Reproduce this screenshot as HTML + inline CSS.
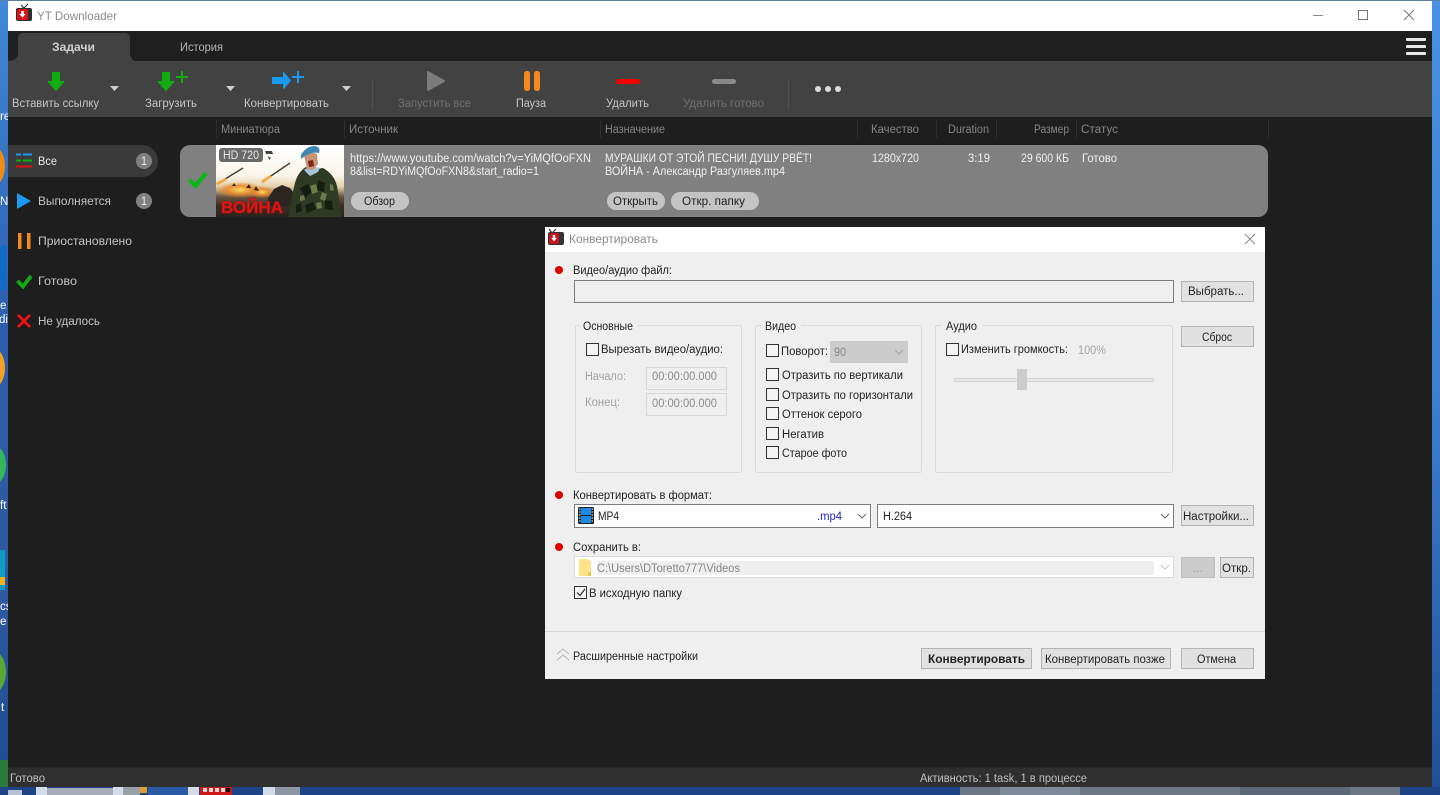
<!DOCTYPE html>
<html lang="ru"><head><meta charset="utf-8"><title>YT Downloader</title>
<style>
html,body{margin:0;padding:0;width:1440px;height:795px;overflow:hidden;background:#1e1e1e}
svg{display:block}
text{font-family:"Liberation Sans","DejaVu Sans",sans-serif;font-size:11.5px;white-space:pre}
.tb{fill:#c6c6c6}.dis{fill:#6f6f6f}.hd{fill:#858585}.sb{fill:#c4c4c4}.rw{fill:#efefef}
.pl{fill:#222}.dl{fill:#222}.gy{fill:#a2a2a2}
.btn{fill:#e1e1e1;stroke:#b4b4b4}.cb{fill:#f4f4f4;stroke:#333}
.grp{fill:none;stroke:#dadada}
</style></head><body>
<svg width="1440" height="795" viewBox="0 0 1440 795" xmlns="http://www.w3.org/2000/svg">
<defs>
<linearGradient id="dl" x1="0" y1="0" x2="0" y2="1"><stop offset="0" stop-color="#4189d8"/><stop offset=".4" stop-color="#2d5fae"/><stop offset=".75" stop-color="#30599f"/><stop offset="1" stop-color="#1d4a8e"/></linearGradient>
<linearGradient id="dr" x1="0" y1="0" x2="0" y2="1"><stop offset="0" stop-color="#4a90e2"/><stop offset=".5" stop-color="#3c7fd0"/><stop offset="1" stop-color="#1f4f96"/></linearGradient>
<linearGradient id="sky" x1="0" y1="0" x2="0" y2="1"><stop offset="0" stop-color="#fff"/><stop offset=".42" stop-color="#faf6ec"/><stop offset=".58" stop-color="#e4cfa8"/><stop offset=".72" stop-color="#6a5240"/><stop offset=".85" stop-color="#3a2c24"/><stop offset="1" stop-color="#2a221c"/></linearGradient>
<radialGradient id="ex"><stop offset="0" stop-color="#ffdc62"/><stop offset=".55" stop-color="#e8892a" stop-opacity=".85"/><stop offset="1" stop-color="#e8892a" stop-opacity="0"/></radialGradient>
</defs>

<!-- desktop -->
<rect width="1440" height="795" fill="#1e4488"/>
<rect width="8" height="795" fill="url(#dl)"/>
<rect x="1432" width="8" height="795" fill="url(#dr)"/>
<rect width="1440" height="1" fill="#5d7f9f"/>
<ellipse cx="-7" cy="166" rx="12" ry="20" fill="#f08a10"/>
<rect x="0" y="245" width="7" height="46" rx="3" fill="#1468c8"/>
<ellipse cx="-7" cy="368" rx="12" ry="20" fill="#f4a020"/>
<ellipse cx="-7" cy="465" rx="13" ry="20" fill="#35b85a"/>
<rect x="0" y="550" width="5" height="40" fill="#109cc0"/><rect x="0" y="577" width="5" height="8" fill="#f2b21c"/>
<ellipse cx="-7" cy="672" rx="13" ry="21" fill="#5aa83a"/>
<rect x="0" y="760" width="8" height="27" fill="#2a7a3a"/>
<text x="0" y="205" style="fill:#fff">N</text><text x="0" y="120" style="fill:#fff">re</text><text x="0" y="309" style="fill:#fff">e</text><text x="-1" y="323" style="fill:#fff">di</text>
<text x="0" y="509" style="fill:#fff">ft</text><text x="0" y="610" style="fill:#fff">cs</text><text x="0" y="625" style="fill:#fff">e</text><text x="1" y="711" style="fill:#fff">t</text>
<!-- bottom strip -->
<rect x="0" y="787" width="1440" height="8" fill="#1e4488"/>
<rect x="8" y="790" width="14" height="5" fill="#b9c2d2"/>
<rect x="36" y="787" width="11" height="8" fill="#d4dcea"/>
<rect x="47" y="788" width="66" height="7" fill="#a6adb8"/>
<rect x="113" y="787" width="10" height="8" fill="#d4dcea"/>
<rect x="123" y="787" width="17" height="8" fill="#9aa0a8"/>
<rect x="140" y="787" width="7" height="6" fill="#e0a030"/>
<rect x="148" y="787" width="40" height="8" fill="#2a5aa5"/>
<rect x="188" y="787" width="11" height="8" fill="#d4dcea"/>
<rect x="200" y="787" width="32" height="8" fill="#d01818"/>
<path d="M203 788h4v4h-4zM209 788h4v4h-4zM215 788h4v4h-4zM221 788h4v4h-4z" fill="#f6d8d8"/>
<rect x="226" y="788" width="4" height="4" fill="#111"/>
<rect x="263" y="787" width="12" height="8" fill="#d4dcea"/>
<rect x="275" y="787" width="25" height="8" fill="#8c96a4"/>
<rect x="960" y="787" width="440" height="8" fill="#6c7684"/>
<rect x="1000" y="787" width="80" height="8" fill="#7c8a9a"/>
<rect x="1240" y="787" width="110" height="8" fill="#5a6878"/>

<!-- main window -->
<rect x="8" y="1" width="1424" height="30" fill="#fff"/>
<rect x="8" y="31" width="1424" height="30" fill="#1f1f1f"/>
<rect x="8" y="61" width="1424" height="56" fill="#424242"/>
<rect x="8" y="117" width="1424" height="650" fill="#1e1e1e"/>
<rect x="8" y="767" width="1424" height="20" fill="#2f2f2f"/>

<!-- title bar -->
<path d="M20 9 L24 8 L28 4" stroke="#333" stroke-width="1.200" fill="none"/><path d="M21 5 L24 8" stroke="#333" stroke-width="1.200"/>
<rect x="16" y="8" width="16" height="13" rx="2" fill="#2f2f2f"/>
<rect x="17" y="9" width="11" height="11" rx="2" fill="#d8131c"/>
<path d="M21.200 11 h2.600 v3 h1.800 l-3.100 3.600 l-3.100 -3.600 h1.800z" fill="#fff"/>
<text x="37" y="20" textLength="80" lengthAdjust="spacingAndGlyphs" style="fill:#8a8a8a;font-size:12px">YT Downloader</text>
<path d="M1313 15.500h10" stroke="#8a8a8a"/>
<rect x="1358.500" y="10.500" width="9" height="9" fill="none" stroke="#777"/>
<path d="M1404 10l10 10M1414 10l-10 10" stroke="#777" fill="none"/>

<!-- tabs -->
<path d="M18 61 V38 a5 5 0 0 1 5-5 H125 a5 5 0 0 1 5 5 V61z" fill="#424242"/>
<path d="M8 61 Q16 61 18 55 V61z M130 55 Q132 61 136 61 H130z" fill="#424242"/>
<text x="52" y="51" textLength="43" lengthAdjust="spacingAndGlyphs" style="fill:#cfcfcf;font-weight:bold">Задачи</text>
<text x="180" y="51" textLength="43" lengthAdjust="spacingAndGlyphs" style="fill:#b4b4b4">История</text>
<rect x="1406" y="38" width="20" height="3" rx="1" fill="#e8e8e8"/><rect x="1406" y="45" width="20" height="3" rx="1" fill="#e8e8e8"/><rect x="1406" y="52" width="20" height="3" rx="1" fill="#e8e8e8"/>

<!-- toolbar icons -->
<path d="M52.500 72.500h7v9h4.500L56 90.500 48 81.500h4.500z" fill="#10ac10" stroke="#10ac10" stroke-linejoin="round"/>
<path d="M162.500 72.500h7v9h4.500L166 90.500 158 81.500h4.500z" fill="#10ac10" stroke="#10ac10" stroke-linejoin="round"/>
<path d="M176 77h12M182 71v12" stroke="#10ac10" stroke-width="2"/>
<path d="M272.500 77.500h11V72.500l7 8-7 8v-5h-11z" fill="#1a9af0" stroke="#1a9af0" stroke-linejoin="round"/>
<path d="M292 77h12M298 71v12" stroke="#1a9af0" stroke-width="2"/>
<path d="M110 86h9l-4.500 5z M226 86h9l-4.500 5z M342 86h9l-4.500 5z" fill="#cfcfcf"/>
<path d="M372.500 80v30M788.500 80v30" stroke="#505050"/>
<path d="M428 72l16 9-16 9z" fill="#7c7c7c" stroke="#7c7c7c" stroke-width="2" stroke-linejoin="round"/>
<rect x="524" y="71" width="6" height="20" rx="2.500" fill="#f5871f"/><rect x="534" y="71" width="6" height="20" rx="2.500" fill="#f5871f"/>
<rect x="616" y="79" width="24" height="5" rx="2.500" fill="#f00000"/>
<rect x="712" y="79" width="24" height="5" rx="2.500" fill="#888"/>
<circle cx="818" cy="89" r="3" fill="#ddd"/><circle cx="828" cy="89" r="3" fill="#ddd"/><circle cx="838" cy="89" r="3" fill="#ddd"/>
<text class="tb" x="12" y="107" textLength="87" lengthAdjust="spacingAndGlyphs">Вставить ссылку</text>
<text class="tb" x="145" y="107" textLength="52" lengthAdjust="spacingAndGlyphs">Загрузить</text>
<text class="tb" x="244" y="107" textLength="85" lengthAdjust="spacingAndGlyphs">Конвертировать</text>
<text class="dis" x="398" y="107" textLength="73" lengthAdjust="spacingAndGlyphs">Запустить все</text>
<text class="tb" x="516" y="107" textLength="30" lengthAdjust="spacingAndGlyphs">Пауза</text>
<text class="tb" x="606" y="107" textLength="43" lengthAdjust="spacingAndGlyphs">Удалить</text>
<text class="dis" x="683" y="107" textLength="81" lengthAdjust="spacingAndGlyphs">Удалить готово</text>

<!-- column header -->
<path d="M216.500 120v18M344.500 120v18M600.500 120v18M857.500 120v18M936.500 120v18M996.500 120v18M1076.500 120v18M1268.500 120v18" stroke="#2e2e2e"/>
<text class="hd" x="221" y="133" textLength="59" lengthAdjust="spacingAndGlyphs">Миниатюра</text>
<text class="hd" x="349" y="133" textLength="49" lengthAdjust="spacingAndGlyphs">Источник</text>
<text class="hd" x="605" y="133" textLength="60" lengthAdjust="spacingAndGlyphs">Назначение</text>
<text class="hd" x="871" y="133" textLength="48" lengthAdjust="spacingAndGlyphs">Качество</text>
<text class="hd" x="948" y="133" textLength="41" lengthAdjust="spacingAndGlyphs">Duration</text>
<text class="hd" x="1034" y="133" textLength="35" lengthAdjust="spacingAndGlyphs">Размер</text>
<text class="hd" x="1081" y="133" textLength="37" lengthAdjust="spacingAndGlyphs">Статус</text>

<!-- sidebar -->
<path d="M8 145H142a16 16 0 0 1 0 32H8z" fill="#3a3a3a"/>
<path d="M16 154.500h5M23 154.500h9" stroke="#1a9af0" stroke-width="2"/>
<path d="M16 160.500h5M23 160.500h9" stroke="#10ac10" stroke-width="2"/>
<path d="M16 166.500h16" stroke="#e01010" stroke-width="2"/>
<circle cx="144" cy="161" r="8" fill="#808080"/><circle cx="144" cy="201" r="8" fill="#808080"/>
<text x="141" y="165" textLength="6" lengthAdjust="spacingAndGlyphs" style="fill:#eee">1</text>
<text x="141" y="205" textLength="6" lengthAdjust="spacingAndGlyphs" style="fill:#eee">1</text>
<path d="M17 193l14 8-14 8z" fill="#1a9af0"/>
<rect x="18" y="233" width="3.500" height="16" fill="#f5871f"/><rect x="27" y="233" width="3.500" height="16" fill="#f5871f"/>
<path d="M17.500 281l5.500 5.500 8-10.500" stroke="#10ac10" stroke-width="3.800" fill="none"/>
<path d="M18 315l12 12M30 315l-12 12" stroke="#ee1111" stroke-width="2.800" fill="none"/>
<text x="38" y="165" textLength="19" lengthAdjust="spacingAndGlyphs" style="fill:#eaeaea">Все</text>
<text class="sb" x="38" y="205" textLength="73" lengthAdjust="spacingAndGlyphs">Выполняется</text>
<text class="sb" x="38" y="245" textLength="94" lengthAdjust="spacingAndGlyphs">Приостановлено</text>
<text class="sb" x="38" y="285" textLength="39" lengthAdjust="spacingAndGlyphs">Готово</text>
<text class="sb" x="38" y="325" textLength="62" lengthAdjust="spacingAndGlyphs">Не удалось</text>

<!-- row -->
<rect x="180" y="145" width="1088" height="72" rx="10" fill="#808080"/>
<path d="M189.500 180l6 6 10.500-13" stroke="#10b418" stroke-width="4.500" fill="none"/>
<svg x="216" y="145" width="128" height="72" viewBox="216 145 128 72">
<rect x="216" y="145" width="128" height="72" fill="url(#sky)"/>
<ellipse cx="240" cy="190" rx="24" ry="8" fill="url(#ex)"/>
<ellipse cx="262" cy="192" rx="13" ry="6" fill="url(#ex)"/>
<path d="M217 184l26-16" stroke="#4a3a2a" stroke-width="1.400"/><path d="M217 184l9-5" stroke="#f6a63e" stroke-width="2.600"/>
<path d="M262 182l28-19" stroke="#4a3a2a" stroke-width="1.400"/><path d="M262 182l9-6" stroke="#f6a63e" stroke-width="2.600"/>
<path d="M268 198l6-9 8-4 8 3 6 8 2 10H268z" fill="#2b2720"/>
<path d="M232 186l2-3 2 3zM246 188l3-4 2 4zM254 190l2-4 3 5z" fill="#3a2418"/>
<path d="M288 217l6-30q3-15 12-20l5 3 12-2q11 6 14 18l5 31z" fill="#2f3a24"/>
<path d="M300 188l8-4 4 8-7 6zM318 180l7 3-1 9-7-2zM305 205l8-3 3 7-9 4zM325 200l7 1 1 9-8-1zM296 205l5-2 1 8-6 2z" fill="#161c10"/>
<path d="M310 186l6-2 2 8-6 2zM322 192l5 2-2 7-5-2zM300 196l4-1 1 5-5 1zM316 203l5-1 1 6-5 1zM330 184l3 1 1 6-4-1z" fill="#6d7a4c"/>
<path d="M304 170l6 6 8-4 2-4-10-2z" fill="#a8c4da"/>
<path d="M304 155q6-4 13-1l1 10-5 6-6-1z" fill="#c89478"/>
<path d="M308 161l5-1 1 6-5 1z" fill="#7a2418"/>
<path d="M301 155q5-9 14-9 6 1 4 7-9-2-18 6z" fill="#3d88b4"/>
<text x="221" y="213" textLength="62" lengthAdjust="spacingAndGlyphs" style="fill:#e01818;font-size:17px;font-weight:bold;stroke:#c01010;stroke-width:.8">ВОЙНА</text>
<rect x="219" y="148" width="44" height="14" rx="3" fill="#6a6a6a"/>
<text x="223" y="159" textLength="36" lengthAdjust="spacingAndGlyphs" style="fill:#e6e6e6">HD 720</text>
<path d="M265 151h7l1 3h-7zM268 156l3 2-2 2z" fill="#444"/>
</svg>
<text class="rw" x="350" y="162" textLength="241" lengthAdjust="spacingAndGlyphs">https://www.youtube.com/watch?v=YiMQfOoFXN</text>
<text class="rw" x="350" y="175" textLength="189" lengthAdjust="spacingAndGlyphs">8&amp;list=RDYiMQfOoFXN8&amp;start_radio=1</text>
<text class="rw" x="605" y="162" textLength="207" lengthAdjust="spacingAndGlyphs">МУРАШКИ ОТ ЭТОЙ ПЕСНИ! ДУШУ РВЁТ!</text>
<text class="rw" x="605" y="175" textLength="180" lengthAdjust="spacingAndGlyphs">ВОЙНА - Александр Разгуляев.mp4</text>
<text class="rw" x="872" y="162" textLength="47" lengthAdjust="spacingAndGlyphs">1280x720</text>
<text class="rw" x="968" y="162" textLength="22" lengthAdjust="spacingAndGlyphs">3:19</text>
<text class="rw" x="1021" y="162" textLength="48" lengthAdjust="spacingAndGlyphs">29 600 КБ</text>
<text class="rw" x="1082" y="162" textLength="35" lengthAdjust="spacingAndGlyphs">Готово</text>
<rect x="351" y="192" width="58" height="18" rx="9" fill="#c4c4c4"/>
<rect x="607" y="192" width="58" height="18" rx="9" fill="#c4c4c4"/>
<rect x="671" y="192" width="88" height="18" rx="9" fill="#c4c4c4"/>
<text class="pl" x="364" y="205" textLength="31" lengthAdjust="spacingAndGlyphs">Обзор</text>
<text class="pl" x="613" y="205" textLength="45" lengthAdjust="spacingAndGlyphs">Открыть</text>
<text class="pl" x="682" y="205" textLength="63" lengthAdjust="spacingAndGlyphs">Откр. папку</text>

<!-- status -->
<rect x="8" y="767" width="1424" height="1" fill="#262626"/>
<text x="10" y="782" textLength="35" lengthAdjust="spacingAndGlyphs" style="fill:#c0c0c0">Готово</text>
<text x="920" y="782" textLength="167" lengthAdjust="spacingAndGlyphs" style="fill:#c0c0c0">Активность: 1 task, 1 в процессе</text>

<!-- dialog -->
<rect x="545" y="227" width="720" height="452" fill="#efefef"/>
<rect x="545" y="227" width="720" height="25" fill="#fff"/>
<path d="M550 232l2 1 4-4" stroke="#333" stroke-width="1.100" fill="none"/><path d="M549 229l3 4" stroke="#333" stroke-width="1.100"/>
<rect x="548" y="232" width="16" height="13" rx="2" fill="#333"/>
<rect x="549" y="233" width="10" height="11" rx="2" fill="#c8141c"/>
<path d="M552.800 235h2.400v3h1.600l-2.800 3.400-2.800-3.400h1.600z" fill="#fff"/>
<text x="569" y="243" textLength="89" lengthAdjust="spacingAndGlyphs" style="fill:#8a8a8a">Конвертировать</text>
<path d="M1245 234l10 10M1255 234l-10 10" stroke="#888" fill="none"/>

<circle cx="559" cy="270" r="4" fill="#dd0000"/>
<text class="dl" x="573" y="274" textLength="99" lengthAdjust="spacingAndGlyphs">Видео/аудио файл:</text>
<rect x="574.500" y="280.500" width="599" height="22" fill="#efefef" stroke="#7d7d7d"/>
<rect class="btn" x="1181.500" y="281.500" width="72" height="20"/>
<text class="dl" x="1188" y="295" textLength="56" lengthAdjust="spacingAndGlyphs">Выбрать...</text>

<!-- groups -->
<rect class="grp" x="575.500" y="325.500" width="166" height="147" rx="2"/>
<rect class="grp" x="755.500" y="325.500" width="166" height="147" rx="2"/>
<rect class="grp" x="935.500" y="325.500" width="237" height="147" rx="2"/>
<rect x="580" y="320" width="58" height="10" fill="#efefef"/>
<rect x="761" y="320" width="40" height="10" fill="#efefef"/>
<rect x="942" y="320" width="40" height="10" fill="#efefef"/>
<text class="dl" x="583" y="330" textLength="50" lengthAdjust="spacingAndGlyphs">Основные</text>
<text class="dl" x="765" y="330" textLength="31" lengthAdjust="spacingAndGlyphs">Видео</text>
<text class="dl" x="946" y="330" textLength="31" lengthAdjust="spacingAndGlyphs">Аудио</text>
<rect class="btn" x="1181.500" y="326.500" width="72" height="20"/>
<text class="dl" x="1202" y="341" textLength="30" lengthAdjust="spacingAndGlyphs">Сброс</text>

<rect class="cb" x="586.500" y="343.500" width="12" height="12"/>
<text class="dl" x="601" y="353" textLength="122" lengthAdjust="spacingAndGlyphs">Вырезать видео/аудио:</text>
<text class="gy" x="585" y="380" textLength="41" lengthAdjust="spacingAndGlyphs">Начало:</text>
<text class="gy" x="585" y="406" textLength="35" lengthAdjust="spacingAndGlyphs">Конец:</text>
<rect x="646.500" y="367.500" width="80" height="22" fill="#efefef" stroke="#d6d6d6"/>
<rect x="646.500" y="393.500" width="80" height="22" fill="#efefef" stroke="#d6d6d6"/>
<text x="652" y="380" textLength="65" lengthAdjust="spacingAndGlyphs" style="fill:#8a8a8a">00:00:00.000</text>
<text x="652" y="407" textLength="65" lengthAdjust="spacingAndGlyphs" style="fill:#8a8a8a">00:00:00.000</text>

<rect class="cb" x="766.500" y="344.500" width="12" height="12"/>
<text class="dl" x="781" y="355" textLength="47" lengthAdjust="spacingAndGlyphs">Поворот:</text>
<rect x="830" y="341" width="78" height="22" fill="#cccccc"/>
<text x="834" y="356" textLength="12" lengthAdjust="spacingAndGlyphs" style="fill:#858585">90</text>
<path d="M895 350l4 4 4-4" stroke="#a4a4a4" fill="none"/>
<rect class="cb" x="766.500" y="368.500" width="12" height="12"/>
<rect class="cb" x="766.500" y="388.500" width="12" height="12"/>
<rect class="cb" x="766.500" y="407.500" width="12" height="12"/>
<rect class="cb" x="766.500" y="427.500" width="12" height="12"/>
<rect class="cb" x="766.500" y="446.500" width="12" height="12"/>
<text class="dl" x="782" y="379" textLength="121" lengthAdjust="spacingAndGlyphs">Отразить по вертикали</text>
<text class="dl" x="782" y="399" textLength="131" lengthAdjust="spacingAndGlyphs">Отразить по горизонтали</text>
<text class="dl" x="782" y="418" textLength="80" lengthAdjust="spacingAndGlyphs">Оттенок серого</text>
<text class="dl" x="782" y="438" textLength="42" lengthAdjust="spacingAndGlyphs">Негатив</text>
<text class="dl" x="782" y="457" textLength="65" lengthAdjust="spacingAndGlyphs">Старое фото</text>

<rect class="cb" x="946.500" y="343.500" width="12" height="12"/>
<text class="dl" x="961" y="353" textLength="107" lengthAdjust="spacingAndGlyphs">Изменить громкость:</text>
<text class="gy" x="1078" y="354" textLength="28" lengthAdjust="spacingAndGlyphs">100%</text>
<rect x="954.500" y="378.500" width="199" height="3" fill="#e6e6e6" stroke="#d4d4d4"/>
<rect x="1017" y="369" width="10" height="21" fill="#cccccc"/>

<circle cx="559" cy="495" r="4" fill="#dd0000"/>
<text class="dl" x="573" y="499" textLength="139" lengthAdjust="spacingAndGlyphs">Конвертировать в формат:</text>
<rect x="574.500" y="504.500" width="296" height="23" fill="#fff" stroke="#7d7d7d"/>
<rect x="578" y="507" width="16" height="17" rx="1" fill="#222"/>
<rect x="581" y="508" width="10" height="7" fill="#1a8ae6"/><rect x="581" y="516" width="10" height="7" fill="#1a8ae6"/>
<path d="M579 509h1.500M579 512h1.500M579 515h1.500M579 518h1.500M579 521h1.500M591.500 509h1.500M591.500 512h1.500M591.500 515h1.500M591.500 518h1.500M591.500 521h1.500" stroke="#fff"/>
<text class="dl" x="598" y="520" textLength="21" lengthAdjust="spacingAndGlyphs">MP4</text>
<text x="817" y="520" textLength="25" lengthAdjust="spacingAndGlyphs" style="fill:#1f1fc0">.mp4</text>
<path d="M858 514l4 4 4-4" stroke="#666" fill="none"/>
<rect x="877.500" y="504.500" width="296" height="23" fill="#fff" stroke="#7d7d7d"/>
<text class="dl" x="883" y="520" textLength="29" lengthAdjust="spacingAndGlyphs">H.264</text>
<path d="M1161 514l4 4 4-4" stroke="#666" fill="none"/>
<rect class="btn" x="1181.500" y="505.500" width="72" height="20"/>
<text class="dl" x="1183" y="520" textLength="66" lengthAdjust="spacingAndGlyphs">Настройки...</text>

<circle cx="559" cy="547" r="4" fill="#dd0000"/>
<text class="dl" x="573" y="551" textLength="68" lengthAdjust="spacingAndGlyphs">Сохранить в:</text>
<rect x="574.500" y="556.500" width="599" height="21" fill="#fff" stroke="#dcdcdc"/>
<rect x="597" y="561" width="557" height="14" fill="#efefef"/>
<path d="M579 559h9l3 3v14h-12z" fill="#ffe28a"/><path d="M588 572h3v4h-3z" fill="#f2c84a"/>
<text x="597" y="572" textLength="143" lengthAdjust="spacingAndGlyphs" style="fill:#858585">C:\Users\DToretto777\Videos</text>
<path d="M1161 565l4 4 4-4" stroke="#c4c4c4" fill="none"/>
<rect x="1181.500" y="557.500" width="33" height="20" fill="#cccccc" stroke="#c0c0c0"/>
<text x="1193" y="572" textLength="10" lengthAdjust="spacingAndGlyphs" style="fill:#999">...</text>
<rect class="btn" x="1220.500" y="557.500" width="33" height="20"/>
<text class="dl" x="1222" y="572" textLength="29" lengthAdjust="spacingAndGlyphs">Откр.</text>
<rect class="cb" x="574.500" y="586.500" width="12" height="12"/>
<path d="M577 592.500l3 3 5-6.500" stroke="#222" stroke-width="1.100" fill="none"/>
<text class="dl" x="589" y="597" textLength="93" lengthAdjust="spacingAndGlyphs">В исходную папку</text>

<path d="M545 631.500h720" stroke="#d6d6d6"/>
<path d="M557 654l6-5 6 5M557 660l6-5 6 5" stroke="#b4b4b4" fill="none"/>
<text class="dl" x="573" y="660" textLength="125" lengthAdjust="spacingAndGlyphs">Расширенные настройки</text>
<rect class="btn" x="921.500" y="648.500" width="110" height="20"/>
<text class="dl" x="928" y="663" textLength="97" lengthAdjust="spacingAndGlyphs" style="font-weight:bold">Конвертировать</text>
<rect class="btn" x="1041.500" y="648.500" width="129" height="20"/>
<text class="dl" x="1045" y="663" textLength="120" lengthAdjust="spacingAndGlyphs">Конвертировать позже</text>
<rect class="btn" x="1181.500" y="648.500" width="72" height="20"/>
<text class="dl" x="1197" y="663" textLength="39" lengthAdjust="spacingAndGlyphs">Отмена</text>
</svg>
</body></html>
